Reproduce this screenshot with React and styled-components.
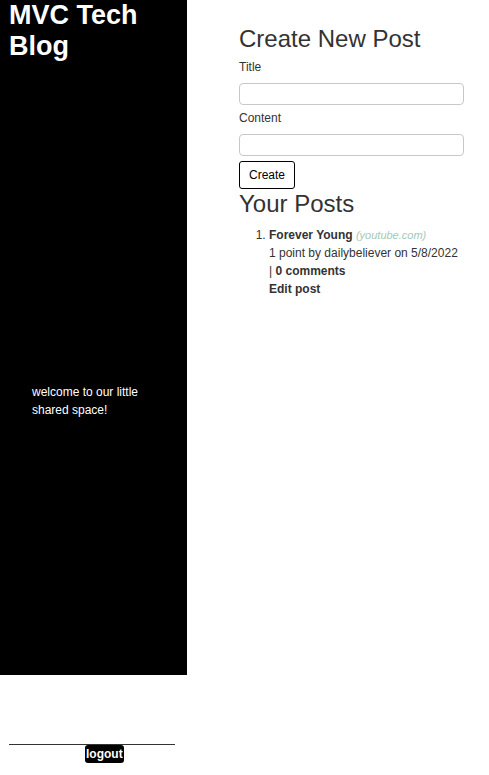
import React from "react";
import styled, { createGlobalStyle } from "styled-components";

const GlobalStyle = createGlobalStyle`
  body {
    margin: 0;
    background: #fff;
    font-family: "Liberation Sans", Arial, sans-serif;
  }
`;

const App = () => {
  return (
    <>
      <GlobalStyle />
      <Page>
        <Sidebar>
          <BlogTitle>MVC Tech Blog</BlogTitle>
          <Welcome>welcome to our little shared space!</Welcome>
        </Sidebar>
        <Main>
          <Heading>Create New Post</Heading>
          <Label>Title</Label>
          <Field type="text" />
          <Label>Content</Label>
          <Field type="text" />
          <CreateButton>Create</CreateButton>
          <Heading>Your Posts</Heading>
          <PostList>
            <li>
              <PostTitle>Forever Young</PostTitle>{" "}
              <Source>(youtube.com)</Source>
              <Meta>1 point by dailybeliever on 5/8/2022</Meta>
              <Meta>
                | <b>0 comments</b>
              </Meta>
              <EditLink>Edit post</EditLink>
            </li>
          </PostList>
        </Main>
      </Page>
      <Footer>
        <Rule />
        <LogoutButton>logout</LogoutButton>
      </Footer>
    </>
  );
};

const Page = styled.div`
  display: grid;
  grid-template-columns: 187px 1fr;
`;

const Sidebar = styled.aside`
  background: #000;
  color: #fff;
  height: 675px;
  padding: 0 0 0 9px;
  box-sizing: border-box;
`;

const BlogTitle = styled.h1`
  margin: 0;
  font-size: 27px;
  line-height: 31px;
  font-weight: bold;
`;

const Welcome = styled.p`
  margin: 321px 0 0 23px;
  width: 125px;
  font-size: 12px;
  line-height: 18px;
`;

const Main = styled.main`
  padding: 25px 25px 0 52px;
  color: #333;
`;

const Heading = styled.h2`
  margin: 0;
  font-size: 24px;
  line-height: 28px;
  font-weight: normal;
  color: #333;
`;

const Label = styled.label`
  display: block;
  margin: 5px 0 7px;
  font-size: 12px;
  line-height: 18px;
  color: #333;
`;

const Field = styled.input`
  display: block;
  width: 225px;
  height: 22px;
  box-sizing: border-box;
  border: 1px solid #c8c8c8;
  border-radius: 4px;
  margin: 0 0 -1px;
`;

const CreateButton = styled.button`
  display: block;
  margin: 6px 0 1px;
  height: 28px;
  padding: 0 9px;
  background: #fff;
  color: #000;
  border: 1px solid #000;
  border-radius: 3px;
  font-family: "Liberation Sans", Arial, sans-serif;
  font-size: 12px;
`;

const PostList = styled.ol`
  margin: 8px 0 0;
  padding-left: 30px;
  font-size: 12px;
  line-height: 18px;
  color: #333;
`;

const PostTitle = styled.b`
  color: #333;
`;

const Source = styled.i`
  font-size: 11px;
  color: #a3c9b9;
`;

const Meta = styled.div``;

const EditLink = styled.div`
  font-weight: bold;
`;

const Footer = styled.footer`
  padding: 69px 0 0 9px;
`;

const Rule = styled.div`
  width: 166px;
  border-top: 1px solid #333;
`;

const LogoutButton = styled.button`
  display: block;
  margin-left: 76px;
  height: 18px;
  padding: 0 1px;
  background: #000;
  color: #fff;
  border: none;
  border-radius: 3px;
  font-family: "Liberation Sans", Arial, sans-serif;
  font-size: 12px;
  font-weight: bold;
`;

export default App;
